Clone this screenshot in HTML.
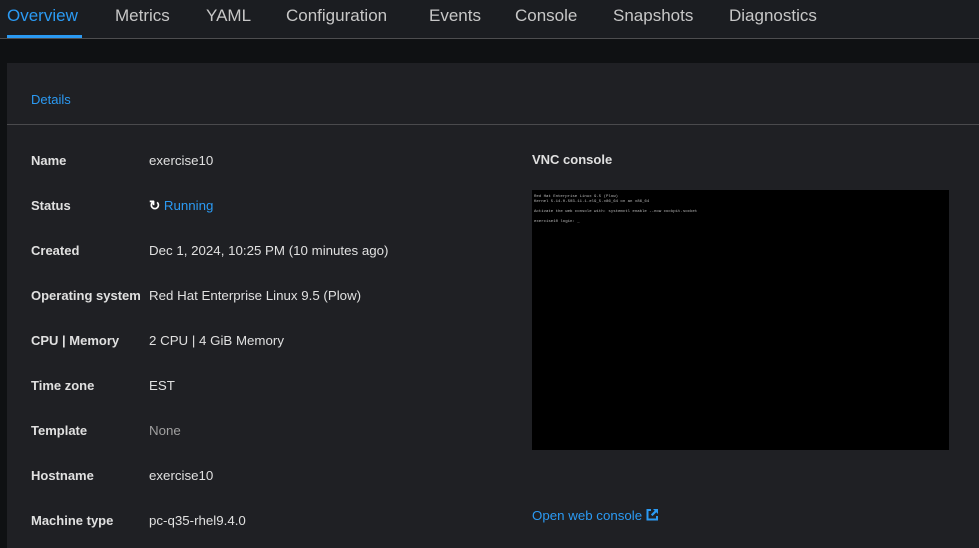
<!DOCTYPE html>
<html><head><style>
body{margin:0;width:979px;height:548px;overflow:hidden;background:#0f1113;font-family:"Liberation Sans",sans-serif;position:relative}
.tabs{position:absolute;left:0;top:0;width:979px;height:38px;background:#1b1d21;border-bottom:1px solid #4d4d4f}
.tab{position:absolute;top:6px;font-size:17px;color:#c7c7c7}
.act{color:#2b9af3}
.ul{position:absolute;left:7px;top:35px;width:75px;height:3px;background:#2b9af3}
.card{position:absolute;left:7px;top:63px;width:972px;height:485px;background:#1f2024}
.hdr{position:absolute;left:24px;top:29px;font-size:13px;color:#2b9af3}
.div{position:absolute;left:0;top:61px;width:972px;height:1px;background:#4a4a4d}
.l{position:absolute;left:24px;font-size:13px;color:#e0e0e0;font-weight:bold}
.v{position:absolute;left:142px;font-size:13.3px;color:#e0e0e0}
.vnc{position:absolute;left:525px;top:127px;width:417px;height:260px;background:#000}
.t{position:absolute;left:2px;font-size:4px;color:#bbb;font-family:"Liberation Mono",monospace;white-space:nowrap}
</style></head><body>
<div class="tabs">
<span class="tab act" style="left:7px">Overview</span>
<span class="tab" style="left:115px">Metrics</span>
<span class="tab" style="left:206px">YAML</span>
<span class="tab" style="left:286px">Configuration</span>
<span class="tab" style="left:429px">Events</span>
<span class="tab" style="left:515px">Console</span>
<span class="tab" style="left:613px">Snapshots</span>
<span class="tab" style="left:729px">Diagnostics</span>
<div class="ul"></div>
</div>
<div class="card">
<div class="hdr">Details</div>
<div class="div"></div>
<div class="l" style="top:90px">Name</div><div class="v" style="top:90px">exercise10</div>
<div class="l" style="top:135px">Status</div><div class="v" style="top:135px;color:#2b9af3"><span style="color:#fff;font-weight:bold">&#x21BB;</span> Running</div>
<div class="l" style="top:180px">Created</div><div class="v" style="top:180px">Dec 1, 2024, 10:25 PM (10 minutes ago)</div>
<div class="l" style="top:225px">Operating system</div><div class="v" style="top:225px">Red Hat Enterprise Linux 9.5 (Plow)</div>
<div class="l" style="top:270px">CPU | Memory</div><div class="v" style="top:270px">2 CPU | 4 GiB Memory</div>
<div class="l" style="top:315px">Time zone</div><div class="v" style="top:315px">EST</div>
<div class="l" style="top:360px">Template</div><div class="v" style="top:360px;color:#a0a0a0">None</div>
<div class="l" style="top:405px">Hostname</div><div class="v" style="top:405px">exercise10</div>
<div class="l" style="top:450px">Machine type</div><div class="v" style="top:450px">pc-q35-rhel9.4.0</div>
<div class="l" style="left:525px;top:89px">VNC console</div>
<div class="vnc">
<div class="t" style="top:5px">Red Hat Enterprise Linux 9.5 (Plow)</div>
<div class="t" style="top:10px">Kernel 5.14.0-503.11.1.el9_5.x86_64 on an x86_64</div>
<div class="t" style="top:20px">Activate the web console with: systemctl enable --now cockpit.socket</div>
<div class="t" style="top:30px">exercise10 login: _</div>
</div>
<div class="v" style="left:525px;top:445px;color:#2b9af3">Open web console <svg width="13" height="13" viewBox="0 0 13 13" style="vertical-align:-1px"><path d="M5 2H1.5V11.5H11V8" fill="none" stroke="#2b9af3" stroke-width="2"/><path d="M7 1H12V6L10.3 4.3L6.5 8.1L4.9 6.5L8.7 2.7Z" fill="#2b9af3"/></svg></div>
</div>
</body></html>
